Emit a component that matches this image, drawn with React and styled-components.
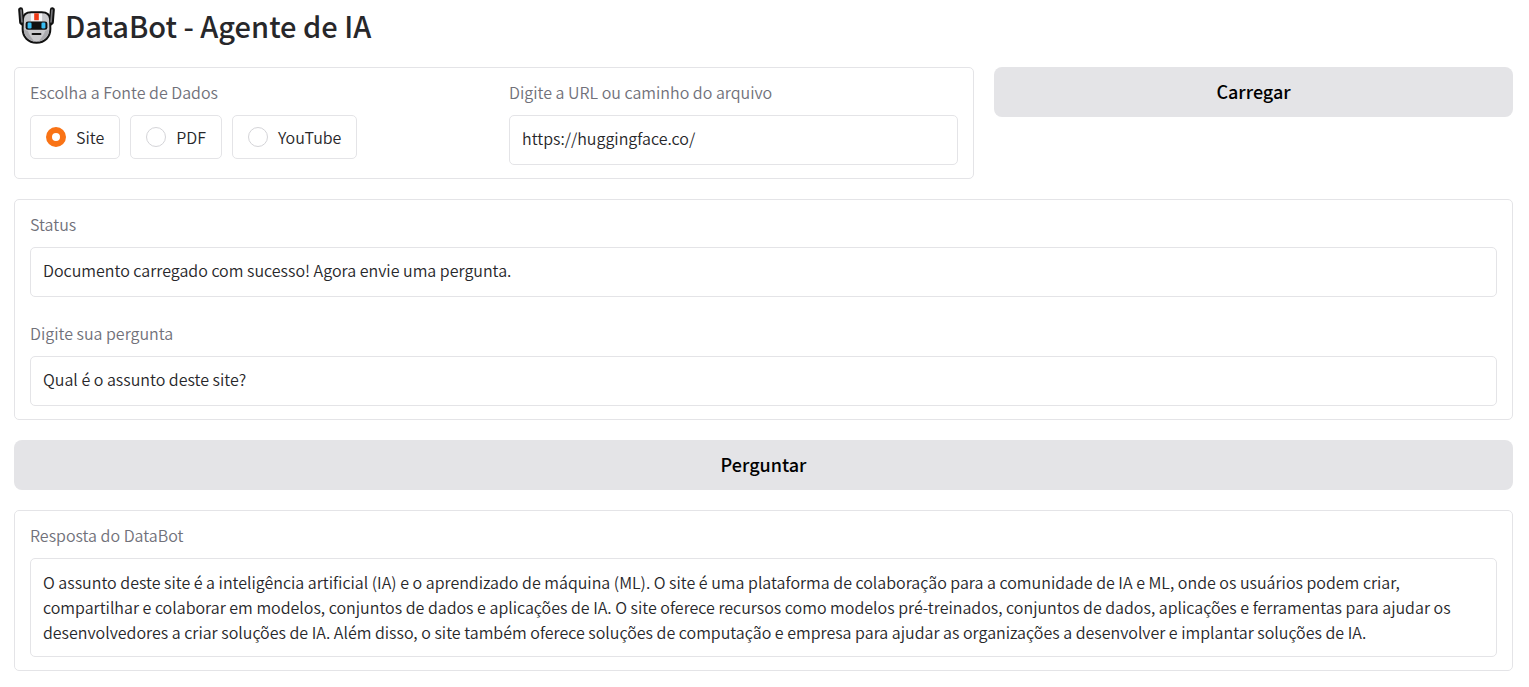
import React, { useState } from "react";
import styled, { createGlobalStyle } from "styled-components";

const GlobalStyle = createGlobalStyle`
  *, *::before, *::after { box-sizing: border-box; }
  body {
    margin: 0;
    background: #ffffff;
    color: #27272a;
    font-family: "Noto Sans CJK SC", "Open Sans", sans-serif;
    font-size: 16px;
    line-height: 24px;
    font-weight: 350;
  }
`;

const Page = styled.main`
  display: flex;
  flex-direction: column;
  gap: 20px;
  padding: 0 16px 16px 14px;
`;

const Title = styled.h1`
  display: flex;
  align-items: flex-start;
  gap: 10px;
  height: 47px;
  margin: 0;
  padding: 7px 0 0 4px;
  font-size: 29px;
  line-height: 36px;
  font-weight: 500;
`;

const SourceRow = styled.div`
  display: grid;
  grid-template-columns: 37fr 20fr;
  align-items: start;
  gap: 20px;
`;

const Panel = styled.section`
  display: grid;
  grid-template-columns: repeat(${(p) => p.$columns || 1}, minmax(0, 1fr));
  padding-bottom: 1px;
  border: 1px solid #e4e4e7;
  border-radius: 5px;
`;

const Block = styled.div`
  display: flex;
  flex-direction: column;
  gap: 12px;
  padding: 13px 15px 12px;
`;

const ChoiceBlock = styled.fieldset`
  min-width: 0;
  margin: 0;
  padding: 13px 15px 12px;
  border: 0;
`;

const Label = styled.label`
  color: #71717a;
  line-height: 22px;
`;

const Legend = styled.legend`
  float: left;
  width: 100%;
  margin-bottom: 12px;
  padding: 0;
  color: #71717a;
  line-height: 22px;
`;

const Choices = styled.div`
  clear: both;
  display: flex;
  flex-wrap: wrap;
  gap: 10px;
`;

const Choice = styled.label`
  display: flex;
  align-items: center;
  gap: 10px;
  height: 44px;
  padding: 0 15px;
  border: 1px solid #e4e4e7;
  border-radius: 5px;
  line-height: 22px;
  cursor: pointer;
`;

const Radio = styled.input`
  appearance: none;
  width: 20px;
  height: 20px;
  margin: 0;
  border: 1px solid #d4d4d8;
  border-radius: 50%;
  background: #ffffff;

  &:checked {
    border: 6px solid #f97316;
  }
`;

const TextInput = styled.input`
  width: 100%;
  height: 50px;
  padding: 0 12px 5px;
  border: 1px solid #e4e4e7;
  border-radius: 5px;
  background: #ffffff;
  color: inherit;
  font: inherit;
`;

const TextArea = styled.textarea`
  display: block;
  width: 100%;
  padding: 11px 12px;
  border: 1px solid #e4e4e7;
  border-radius: 5px;
  background: #ffffff;
  color: inherit;
  font: inherit;
  line-height: 25px;
  resize: none;
  overflow: hidden;
`;

const Button = styled.button`
  width: 100%;
  height: 50px;
  padding: 0 20px 2px;
  border: 0;
  border-radius: 8px;
  background: #e4e4e7;
  color: #000000;
  font-family: inherit;
  font-size: 18px;
  line-height: 24px;
  font-weight: 500;
  cursor: pointer;
`;

function Robot() {
  return (
    <svg width="37" height="37" viewBox="24 22 112 112" aria-hidden="true">
      <path
        d="M32 30l3 38 10 8M128 30l-3 38-10 8"
        fill="none"
        stroke="#111"
        strokeWidth="15"
        strokeLinecap="round"
        strokeLinejoin="round"
      />
      <path
        d="M64 38h32c14 0 24 7 25 20l1 30c0 24-16 42-42 42S38 112 38 88l1-30c1-13 11-20 25-20z"
        fill="#c9c9cc"
        stroke="#111"
        strokeWidth="6"
      />
      <path
        d="M33 31l3 36M127 31l-3 36"
        fill="none"
        stroke="#77777b"
        strokeWidth="5"
        strokeLinecap="round"
      />
      <path d="M42 90c1 18 12 33 32 37-8-10-18-22-20-32zM118 90c-1 18-12 33-32 37 8-10 18-22 20-32z" fill="#aaaaae" />
      <rect x="63" y="42" width="34" height="24" fill="#f7f7f8" />
      <rect x="73" y="41" width="14" height="21" fill="#f03a17" />
      <rect x="47" y="66" width="66" height="25" rx="7" fill="#111" />
      <rect x="53" y="69" width="12" height="18" rx="4" fill="#38bdf2" />
      <rect x="95" y="69" width="12" height="18" rx="4" fill="#38bdf2" />
      <path d="M68 104h24" stroke="#111" strokeWidth="6" strokeLinecap="round" />
    </svg>
  );
}

const SOURCES = ["Site", "PDF", "YouTube"];

const ANSWER =
  "O assunto deste site é a inteligência artificial (IA) e o aprendizado de máquina (ML). O site é uma plataforma de colaboração para a comunidade de IA e ML, onde os usuários podem criar, compartilhar e colaborar em modelos, conjuntos de dados e aplicações de IA. O site oferece recursos como modelos pré-treinados, conjuntos de dados, aplicações e ferramentas para ajudar os desenvolvedores a criar soluções de IA. Além disso, o site também oferece soluções de computação e empresa para ajudar as organizações a desenvolver e implantar soluções de IA.";

export default function App() {
  const [source, setSource] = useState("Site");
  const [url, setUrl] = useState("https://huggingface.co/");
  const [question, setQuestion] = useState("Qual é o assunto deste site?");

  return (
    <>
      <GlobalStyle />
      <Page>
        <Title>
          <Robot />
          DataBot - Agente de IA
        </Title>

        <SourceRow>
          <Panel $columns={2}>
            <ChoiceBlock>
              <Legend>Escolha a Fonte de Dados</Legend>
              <Choices>
                {SOURCES.map((name) => (
                  <Choice key={name}>
                    <Radio
                      type="radio"
                      name="source"
                      value={name}
                      checked={source === name}
                      onChange={() => setSource(name)}
                    />
                    {name}
                  </Choice>
                ))}
              </Choices>
            </ChoiceBlock>
            <Block>
              <Label htmlFor="url">Digite a URL ou caminho do arquivo</Label>
              <TextInput id="url" value={url} onChange={(e) => setUrl(e.target.value)} />
            </Block>
          </Panel>
          <Button type="button">Carregar</Button>
        </SourceRow>

        <Panel>
          <Block>
            <Label htmlFor="status">Status</Label>
            <TextInput
              id="status"
              readOnly
              value="Documento carregado com sucesso! Agora envie uma pergunta."
            />
          </Block>
          <Block>
            <Label htmlFor="question">Digite sua pergunta</Label>
            <TextInput
              id="question"
              value={question}
              onChange={(e) => setQuestion(e.target.value)}
            />
          </Block>
        </Panel>

        <Button type="button">Perguntar</Button>

        <Panel>
          <Block>
            <Label htmlFor="answer">Resposta do DataBot</Label>
            <TextArea id="answer" rows={3} readOnly value={ANSWER} />
          </Block>
        </Panel>
      </Page>
    </>
  );
}
